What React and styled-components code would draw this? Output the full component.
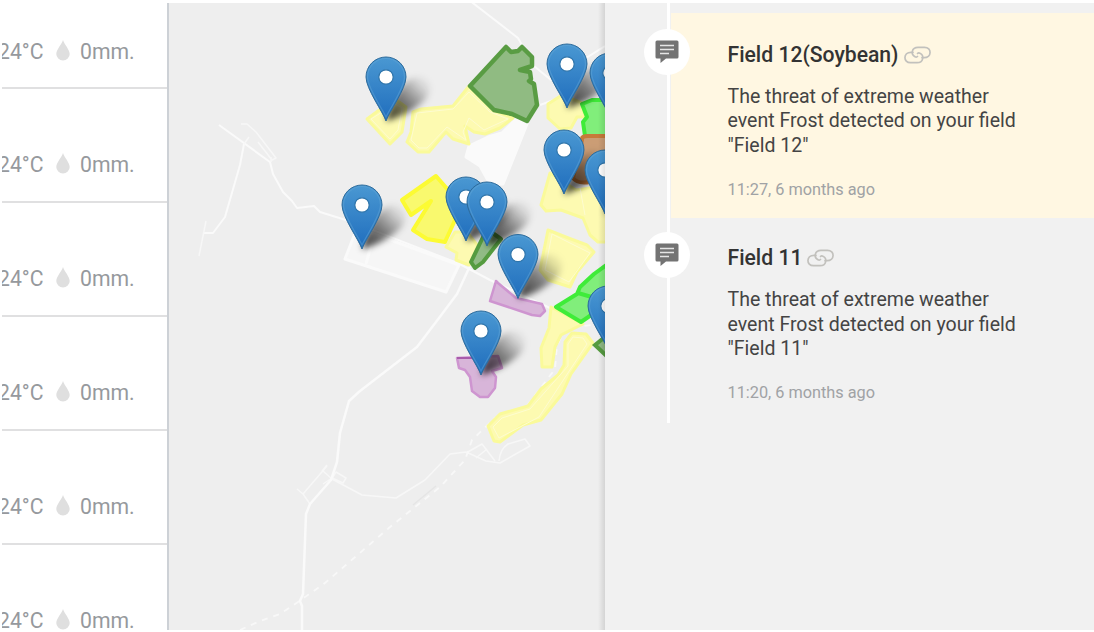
import React from 'react';
import styled, { createGlobalStyle } from 'styled-components';

const GlobalStyle = createGlobalStyle`
  * { box-sizing: border-box; }
  body { margin: 0; background: #fff; font-family: Roboto, "Liberation Sans", sans-serif; overflow: hidden; }
`;

const Page = styled.div`
  display: flex;
  width: 1094px;
  height: 632px;
  padding: 3px 0 2px 2px;
  background: #fff;
  overflow: hidden;
`;

const WeatherColumn = styled.aside`
  flex: none;
  width: 167px;
  overflow: hidden;
  border-right: 2px solid #cdd1d6;
`;

const WeatherRow = styled.div`
  display: flex;
  align-items: center;
  height: ${(p) => (p.$first ? 86.4 : 114)}px;
  padding-top: ${(p) => (p.$first ? 14 : 40)}px;
  border-bottom: 2px solid #e0e0e1;
  color: #96999d;
  font-size: 21.2px;
  line-height: 24px;
  white-space: nowrap;
`;

const Temperature = styled.span`
  margin-left: -4px;
  width: 46px;
  flex: none;
`;

const Drop = styled.svg`
  flex: none;
  width: 14px;
  height: 21px;
  margin: -3px 0 0 12px;
`;

const Rain = styled.span`
  margin-left: 10px;
`;

const MapView = styled.main`
  flex: none;
  width: 436px;
  overflow: hidden;
  background: #eee;
`;

const MapDrawing = styled.svg`
  display: block;
`;

const Feed = styled.section`
  flex: 1;
  background: #f1f1f1;
  padding-top: 10px;
  background-image: linear-gradient(#fff, #fff);
  background-size: 3px 420px;
  background-position: 62px 0;
  background-repeat: no-repeat;
`;

const FeedItem = styled.article`
  display: flex;
  height: 205px;
  margin-bottom: -1.6px;
  padding-top: 16px;
  background: ${(p) =>
    p.$highlighted ? 'linear-gradient(#fff7e2, #fff7e2) 65.5px 0 no-repeat' : 'none'};
`;

const Badge = styled.div`
  display: flex;
  align-items: center;
  justify-content: center;
  flex: none;
  width: 46px;
  height: 46px;
  margin-left: 39px;
  border-radius: 50%;
  background: #fff;
`;

const FeedBody = styled.div`
  margin-left: 37.5px;
  padding-top: 11.8px;
  white-space: nowrap;
`;

const Title = styled.h3`
  display: flex;
  align-items: center;
  gap: 5px;
  margin: 0;
  color: #333;
  font-size: 21.15px;
  font-weight: 500;
  line-height: 28px;
`;

const Message = styled.p`
  margin: 16px 0 0;
  color: #444;
  font-size: 19.52px;
  line-height: 24.4px;
`;

const Time = styled.time`
  display: block;
  margin-top: 21px;
  color: #a0a2a5;
  font-size: 16.3px;
  line-height: 22px;
`;

const rows = ['24°C', '24°C', '24°C', '24°C', '24°C', '24°C'];

const pins = [
  [386, 121], [567, 108], [610, 117], [564, 194], [605, 214],
  [362, 249], [466, 241], [487, 246], [518, 298.5], [608, 350], [481, 375],
];

const notices = [
  { title: 'Field 12(Soybean)', name: '"Field 12"', time: '11:27, 6 months ago', highlighted: true },
  { title: 'Field 11', name: '"Field 11"', time: '11:20, 6 months ago' },
];

const Pin = ({ x, y }) => (
  <g transform={`translate(${x} ${y})`}>
    <path
      d="M0 0C-3-9-20-32-20-44A20 20 0 0 1 20-44C20-32 3-9 0 0Z"
      fill="url(#pinFill)" stroke="#2e6c9c" strokeWidth="1"
    />
    <path
      d="M0-4C-4-13-18.5-33-18.5-44A18.500 18.500 0 0 1 18.500-44C18.500-33 4-13 0-4Z"
      fill="none" stroke="#67a8d8" strokeOpacity=".45" strokeWidth="1.200"
    />
    <circle cy="-44" r="7.200" fill="#fff" stroke="#2f75ab" strokeWidth="1.200" />
  </g>
);

const Shadow = ({ x, y }) => (
  <path
    transform={`translate(${x} ${y})`}
    d="M0 0C3-14 12-38 26-43C42-48 50-34 39-21C29-11 12-3 0 0Z"
    fill="url(#shadowFill)" filter="url(#soft)"
  />
);

const FieldMap = () => (
  <MapDrawing width="436" height="627" viewBox="169 3 436 627">
    <defs>
      <linearGradient id="pinFill" x1="0" y1="0" x2="0" y2="1">
        <stop offset="0" stopColor="#4a98d2" />
        <stop offset="1" stopColor="#1f6dbd" />
      </linearGradient>
      <linearGradient id="shadowFill" x1="0" y1="1" x2="1" y2="0">
        <stop offset="0" stopColor="#000" stopOpacity=".8" />
        <stop offset=".45" stopColor="#000" stopOpacity=".48" />
        <stop offset=".8" stopColor="#000" stopOpacity=".1" />
        <stop offset="1" stopColor="#000" stopOpacity="0" />
      </linearGradient>
      <linearGradient id="edge">
        <stop offset="0" stopColor="#000" stopOpacity="0" />
        <stop offset="1" stopColor="#000" stopOpacity=".11" />
      </linearGradient>
      <filter id="soft" x="-50%" y="-50%" width="200%" height="200%">
        <feGaussianBlur stdDeviation="3.200" />
      </filter>
    </defs>

    <g fill="none" stroke="#fafafa" strokeLinejoin="round">
      <g strokeWidth="2">
        <path d="M219 125L270 162L273 174L283 192L292 201L297 208L314 206L320 212L349 221L460 264" />
        <path d="M244 144L240 165L225 217L213 233H204" />
        <path d="M469 0L518 38L534 66L551 80L605 46M540 105L565 96M456 262L490 280L580 322" />
      </g>
      <g strokeWidth="1.500" stroke="#f7f7f7">
        <path d="M206 221L199 256M244 144L249 137M241 124L247 124L256 132L276 158L272 160L258 142M271 162V157" />
        <path d="M297 489L303 494L310 504M303 494L327 466M323 471L332 479L336 472L346 478L343 483L332 478L323 484M322 471L327 465" />
        <path d="M332 479L362 495L396 498L425 480L450 454L466 452L486 461L500 463L530 446L525 439L508 444Q500 449 499 461M466 453L482 444L495 461M476 458L487 449" />
      </g>
      <path
        strokeWidth="2.500"
        d="M470 266L457 294L439 318L417 347L360 391L349 401L340 433L337 462L331 480L310 504L306 514L303 594L300 601L302 606V632"
      />
      <path d="M240 630L260 621L280 614L298 602L325 583L390 527L440 487L465 460L472 440L495 418L527 406L555 369L557 345L566 328L600 324" strokeWidth="1.800" stroke="#f8f8f8" strokeDasharray="6 6" />
    </g>
    <path d="M413 505L436 486" stroke="#e5e5e5" strokeWidth="1.500" />

    <g fill="#f6f6f6" stroke="#fafafa" strokeWidth="3" strokeLinejoin="round">
      <path d="M357 228L374 234L459 265L446 292L345 259Z" />
      <path d="M374 234L366 264" />
      <path d="M516 119L527 124L503 184H490L480 166L466 157L469 146L488 137L502 133Z" fill="#fafafa" />
    </g>

    <g fill="#fdfab1" stroke="#fafa9a" strokeWidth="3" strokeLinejoin="round">
      <path d="M367 119L382 108L395 99L406 107L402 132L390 144Z" />
      <path d="M469 86L492 109L513 118L500 128L485 134L474 132L465 126L469 144L453 139L446 132L429 152H418L407 142L411 132L413 112L421 109L453 106Z" />
      <path d="M562 95L548 104V118L560 129L571 128L577 117L585 117L582 103Z" />
      <path d="M455 232L446 247L457 253L456 260L469 265L478 246L467 232Z" />
      <path d="M550 173L541 205L546 211L561 210L583 218L590 235L598 242H610V185L576 190Z" />
      <path d="M548 230L540 270L548 280L570 287L577 272L594 252L587 245L571 239Z" />
      <path d="M551 307L549 328L541 348L542 367L552 367L555 347L561 335L583 324Z" />
      <path d="M572 333L565 342L564 365L558 375L541 389L528 406L500 414L488 426L494 441L500 442L523 425L541 420L562 394L571 374L593 343L586 334Z" />
    </g>
    <g fill="none" stroke="#fdfcd0" strokeWidth="1">
      <path d="M371 119L395 104L402 108L398 130L390 139ZM469 92L490 112L508 119L484 130L469 118L463 132L466 140L447 127L427 148H419L411 140L417 113L453 109Z" />
      <path d="M580 188L585 215M552 234L545 270L569 282L590 253ZM573 337L568 344L568 366L530 409L502 418L493 427L499 438L539 417L587 344L583 338Z" />
    </g>
    <path d="M436 176L402 200L411 215L431 201L413 230L427 239L445 242L455 220L449 191Z" fill="#f9f96e" stroke="#fcfb33" strokeWidth="4" strokeLinejoin="round" />

    <path
      d="M506 47L511 52L518 51L522 47L532 57V66L520 70L530 72L531 79L529 81L534 84L537 105L527 121L512 114L494 110L470 86Z"
      fill="#90bb82" stroke="#599c43" strokeWidth="4.500" strokeLinejoin="round"
    />
    <path d="M484 235L471 262L475 268L483 262L501 239L487 229Z" fill="#91bb85" stroke="#559b40" strokeWidth="4" strokeLinejoin="round" />
    <path d="M595 345L616 365V328Z" fill="#91bb85" stroke="#559b40" strokeWidth="4" />
    <g fill="#81ee7b" stroke="#3fec39" strokeWidth="4" strokeLinejoin="round">
      <path d="M613 100H592L582 104L587 117L583 122L585 136H613Z" />
      <path d="M613 260L594 274L580 287L577 294L556 307L581 322L613 300ZM578 293L595 298" />
    </g>
    <path d="M582 140Q581 136 588 136H615V182H590Q577 184 573 178Z" fill="#cb9d75" stroke="#c77a3a" strokeWidth="4" />
    <g fill="#d8b5d9" stroke="#ce95d0" strokeWidth="2.500" strokeLinejoin="round">
      <path d="M496 281L490 301L532 315L540 316L545 311L542 304L516 298L498 283Z" />
      <path d="M457 358L498 356L502 368L492 371L496 377L495 388L488 397H480L472 391L470 377L465 370L459 368Z" />
    </g>
    <path d="M457 358H474" stroke="#a85bab" strokeWidth="2" />

    {pins.map(([x, y]) => <Shadow key={`${x}-${y}`} x={x} y={y} />)}
    {pins.map(([x, y]) => <Pin key={`${x}-${y}`} x={x} y={y} />)}
    <rect x="598" y="3" width="7" height="627" fill="url(#edge)" />
  </MapDrawing>
);

const CommentIcon = () => (
  <svg width="24" height="24" viewBox="0 0 24 24">
    <path d="M2 .5H22Q23.500.5 23.500 2V17Q23.500 18.500 22 18.500H11L5.500 23V18.500H2Q.5 18.500.5 17V2Q.5.5 2 .5Z" fill="#737373" />
    <path d="M5 5.500H19M5 9.500H19M5 13.500H14" stroke="#e5e5e5" strokeWidth="1.700" />
  </svg>
);

const LinkIcon = () => (
  <svg width="27" height="18" viewBox="0 0 27 18" fill="none" stroke="#c2c1bd" strokeWidth="1.700" strokeLinecap="round">
    <path d="M9 6.300H7C-1 6.300-1 16.700 6.500 16.700H13C19.500 16.700 20.500 9.500 16 7.300Q14.500 6.500 13.500 7.500" />
    <path d="M18 11.700H20C28 11.700 28 1.300 20.500 1.300H14C7.500 1.300 6.500 8.500 11 10.700Q12.500 11.500 13.500 10.500" />
  </svg>
);

export default function App() {
  return (
    <>
      <GlobalStyle />
      <Page>
        <WeatherColumn>
          {rows.map((temperature, index) => (
            <WeatherRow key={index} $first={index === 0}>
              <Temperature>{temperature}</Temperature>
              <Drop viewBox="0 0 14 21">
                <path d="M7 0C6 4 .3 9.500.3 14A6.700 6.500 0 0 0 13.700 14C13.700 9.500 8 4 7 0Z" fill="#dfdfdf" />
              </Drop>
              <Rain>0mm.</Rain>
            </WeatherRow>
          ))}
        </WeatherColumn>
        <MapView>
          <FieldMap />
        </MapView>
        <Feed>
          {notices.map((notice) => (
            <FeedItem key={notice.title} $highlighted={notice.highlighted}>
              <Badge><CommentIcon /></Badge>
              <FeedBody>
                <Title>{notice.title}<LinkIcon /></Title>
                <Message>
                  The threat of extreme weather<br />
                  event Frost detected on your field<br />
                  {notice.name}
                </Message>
                <Time>{notice.time}</Time>
              </FeedBody>
            </FeedItem>
          ))}
        </Feed>
      </Page>
    </>
  );
}
